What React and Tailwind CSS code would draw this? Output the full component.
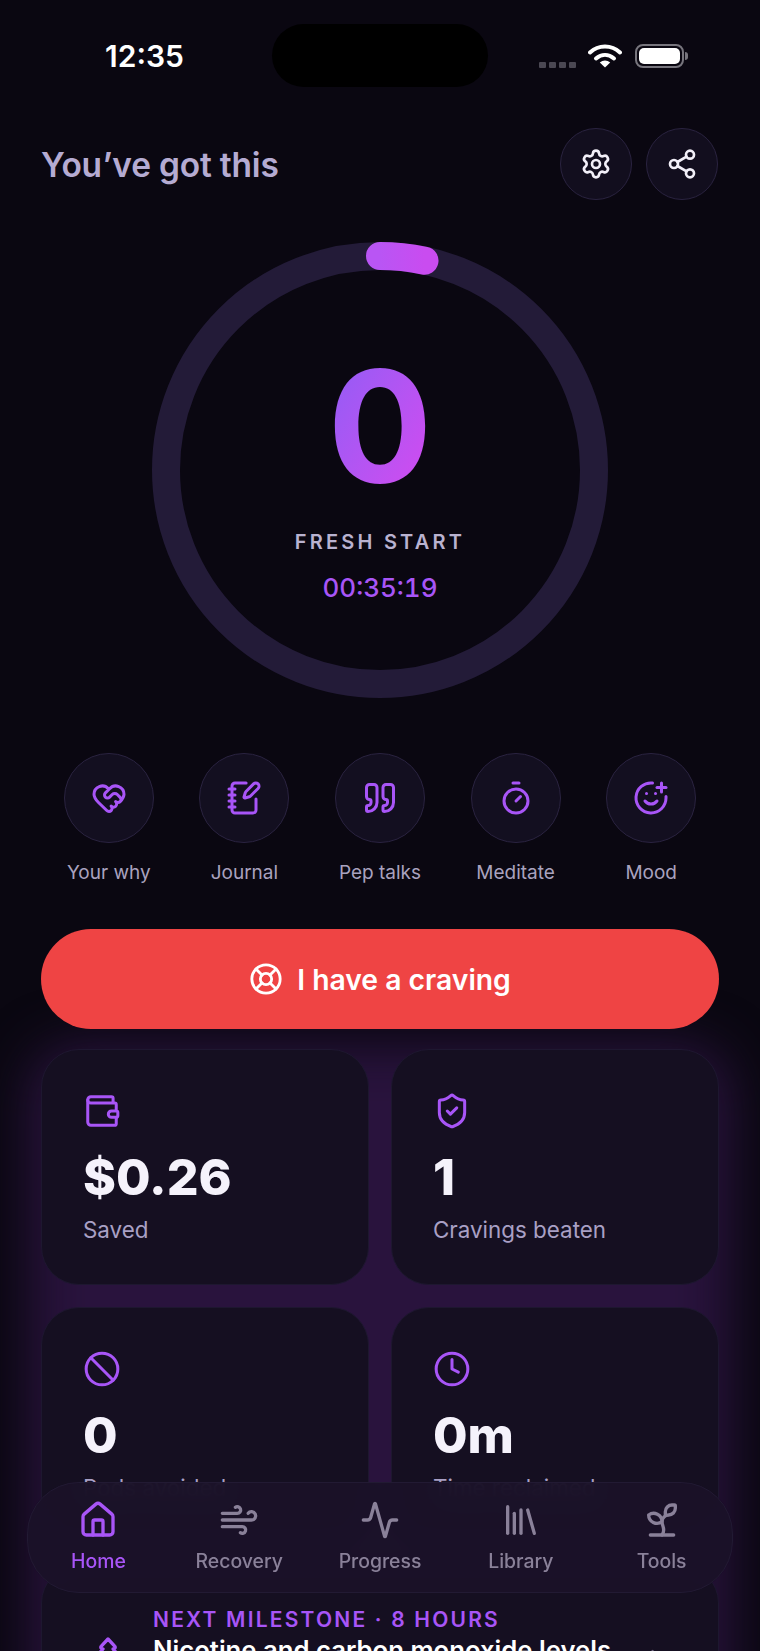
import {
  Settings, Share2, HeartHandshake, NotebookPen, Quote, Timer, SmilePlus, LifeBuoy,
  Wallet, ShieldCheck, Ban, Clock, House, Wind, Activity, Library, Sprout, ChevronRight, TreePine,
} from 'lucide-react';

const actions = [
  { label: 'Your why', Icon: HeartHandshake },
  { label: 'Journal', Icon: NotebookPen },
  { label: 'Pep talks', Icon: Quote },
  { label: 'Meditate', Icon: Timer },
  { label: 'Mood', Icon: SmilePlus },
];

const stats = [
  { value: '$0.26', label: 'Saved', Icon: Wallet },
  { value: '1', label: 'Cravings beaten', Icon: ShieldCheck },
  { value: '0', label: 'Pods avoided', Icon: Ban },
  { value: '0m', label: 'Time reclaimed', Icon: Clock },
];

const tabs = [
  { label: 'Home', Icon: House, active: true },
  { label: 'Recovery', Icon: Wind },
  { label: 'Progress', Icon: Activity },
  { label: 'Library', Icon: Library },
  { label: 'Tools', Icon: Sprout },
];

function StatusBar() {
  return (
    <div className="relative h-[128px] pl-[105px] pt-[38px] text-white">
      <span className="block text-[30px] leading-[36px] font-semibold">12:35</span>
      <div className="absolute left-[272px] top-[24px] w-[216px] h-[63px] rounded-full bg-black" />
      <div className="absolute left-[539px] top-[43px] flex items-end gap-[12px]">
        <div className="flex gap-[3px] h-[23px] items-end">
          {[0, 1, 2, 3].map(i => (
            <span key={i} className="w-[7px] h-[6px] rounded-[1px] bg-[#4b4853]" />
          ))}
        </div>
        <svg width="34" height="25" viewBox="0 0 34 25" fill="none">
          <path d="M2 9.5C10.500 1.500 23.500 1.500 32 9.500" stroke="white" strokeWidth="4" strokeLinecap="round" />
          <path d="M8 15.500C13.500 10.700 20.500 10.700 26 15.500" stroke="white" strokeWidth="4" strokeLinecap="round" />
          <path d="M17 24.500L11.800 19.500C14.800 16.800 19.200 16.800 22.200 19.500Z" fill="white" />
        </svg>
        <div className="flex items-center ml-[1px]">
          <div className="w-[49px] h-[24px] rounded-[8px] border-2 border-[#77757d] p-[2px]">
            <div className="w-full h-full rounded-[5px] bg-white" />
          </div>
          <div className="w-[3px] h-[8px] rounded-r-full bg-[#77757d] ml-[1px]" />
        </div>
      </div>
    </div>
  );
}

function ProgressRing() {
  return (
    <div className="relative w-[456px] h-[456px] mx-auto mt-[42px]">
      <svg className="absolute inset-0" width="456" height="456" viewBox="0 0 456 456" fill="none">
        <defs>
          <linearGradient id="arc" x1="0" y1="0" x2="1" y2="0">
            <stop offset="0" stopColor="#b955f4" />
            <stop offset="1" stopColor="#c94cf0" />
          </linearGradient>
        </defs>
        <circle cx="228" cy="228" r="214" stroke="#231b38" strokeWidth="28" />
        <path d="M228 14A214 214 0 0 1 272.500 18.700" stroke="url(#arc)" strokeWidth="28" strokeLinecap="round" />
      </svg>
      <div className="absolute inset-0 flex flex-col items-center pt-[96px]">
        <div className="text-[155px] leading-[176px] font-[750] bg-gradient-to-br from-[#8b5cf6] to-[#d946ef] bg-clip-text text-transparent">
          0
        </div>
        <div className="mt-[16px] text-[20px] leading-[24px] font-semibold tracking-[3.2px] text-[#b9b2d0]">
          FRESH START
        </div>
        <div className="mt-[18px] text-[26px] leading-[32px] font-medium text-[#a855f7] tabular-nums">
          00:35:19
        </div>
      </div>
    </div>
  );
}

function StatCard({ value, label, Icon }) {
  return (
    <div className="h-[236px] rounded-[38px] border border-[#1e1730] bg-[#150f21] pl-[41px] pt-[42px]">
      <Icon size={38} strokeWidth={1.9} />
      <div className="mt-[16px] text-[50px] leading-[62px] font-extrabold text-[#f5f2fb]">{value}</div>
      <div className="mt-[8px] text-[22.4px] leading-[28px] text-[#a9a0c5]">{label}</div>
    </div>
  );
}

function BottomNav() {
  return (
    <div className="absolute left-[27px] top-[1482px] w-[706px] h-[111px] rounded-[52px] border border-[#221a33] bg-[#1a1228]/95 backdrop-blur-md grid grid-cols-5 pt-[17px]">
      {tabs.map(({ label, Icon, active }) => (
        <div key={label} className={`flex flex-col items-center ${active ? 'text-[#a855f7]' : 'text-[#8a8199]'}`}>
          <Icon size={40} strokeWidth={2} />
          <span className="mt-[8px] text-[19.4px] leading-[26px] font-medium">{label}</span>
        </div>
      ))}
    </div>
  );
}

export default function App() {
  return (
    <div
      className="relative w-[760px] h-[1651px] overflow-hidden bg-[#0a0711] text-white"
      style={{ fontFamily: 'Inter, "Liberation Sans", sans-serif' }}
    >
      <StatusBar />

      {/* Header */}
      <div className="flex items-center justify-between pl-[41px] pr-[42px] h-[72px]">
        <h1 className="text-[33.500px] font-semibold text-[#b5abd2] tracking-[-0.2px] pt-[3px]">You’ve got this</h1>
        <div className="flex gap-[14px]">
          {[Settings, Share2].map((Icon, i) => (
            <button
              key={i}
              type="button"
              className="w-[72px] h-[72px] rounded-full bg-[#120e1e] border border-[#2a2340] flex items-center justify-center"
            >
              <Icon size={32} strokeWidth={2} className="text-[#f2eff8]" />
            </button>
          ))}
        </div>
      </div>

      <ProgressRing />

      {/* Quick actions */}
      <div className="grid grid-cols-5 mx-[41px] mt-[55px]">
        {actions.map(({ label, Icon }) => (
          <div key={label} className="flex flex-col items-center">
            <div className="w-[90px] h-[90px] rounded-full bg-[#130f20] border border-[#2a2340] flex items-center justify-center">
              <Icon size={36} strokeWidth={2} className="text-[#a855f7]" />
            </div>
            <span className="mt-[17px] text-[19px] leading-[26px] text-[#a9a2bf]">{label}</span>
          </div>
        ))}
      </div>

      {/* Craving button */}
      <button
        type="button"
        className="relative z-10 mx-[41px] mt-[43px] w-[678px] h-[100px] rounded-full bg-[#ef4444] flex items-center justify-center gap-[14px]"
      >
        <LifeBuoy size={34} strokeWidth={2} className="text-white" />
        <span className="text-[28.300px] font-semibold text-white pt-[2px]">I have a craving</span>
      </button>

      {/* Stats + milestone */}
      <div className="relative mx-[41px] mt-[20px] text-[#a855f7]">
        {/* soft purple glow behind the cards */}
        <div className="absolute -inset-x-[12px] -top-[4px] -bottom-[12px] rounded-[48px] bg-[#29133d] blur-[26px]" />

        <div className="relative grid grid-cols-2 gap-[22px]">
          {stats.map(s => (
            <StatCard key={s.label} {...s} />
          ))}
        </div>

        {/* Next milestone */}
        <div className="relative mt-[22px] h-[180px] rounded-[38px] border border-[#1e1730] bg-[#150f21] flex items-start pl-[46px] pr-[48px] pt-[40px]">
          <TreePine size={40} strokeWidth={2} className="text-[#a855f7] mt-[28px] shrink-0" />
          <div className="ml-[25px] flex-1 min-w-0">
            <div className="text-[21px] leading-[28px] font-semibold tracking-[2.200px] text-[#a855f7]">
              NEXT MILESTONE · 8 HOURS
            </div>
            <div className="text-[25.700px] leading-[32px] font-semibold text-white whitespace-nowrap">
              Nicotine and carbon monoxide levels
            </div>
          </div>
          <ChevronRight size={28} className="text-[#6f6780] mt-[38px] shrink-0" />
        </div>
      </div>

      <BottomNav />
    </div>
  );
}
